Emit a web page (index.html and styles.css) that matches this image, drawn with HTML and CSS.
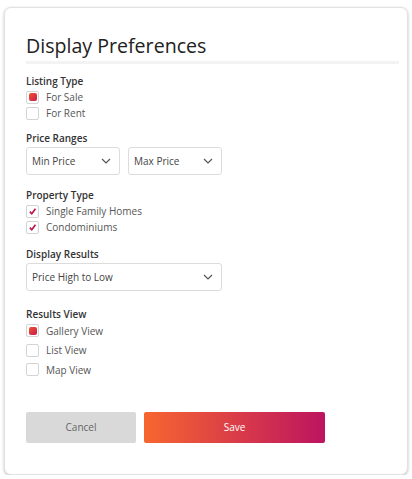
FILE: index.html
```html
<!DOCTYPE html>
<html lang="en">
<head>
  <meta charset="UTF-8">
  <title>Display Preferences</title>
  <link rel="stylesheet" href="styles.css">
</head>
<body>

  <div class="card">
    <h1 class="title">Display Preferences</h1>

    <div class="group">
      <div class="label">Listing Type</div>
      <div class="option"><span class="box dot"></span>For Sale</div>
      <div class="option"><span class="box"></span>For Rent</div>
    </div>

    <div class="group prices">
      <div class="label">Price Ranges</div>
      <div class="selects">
        <div class="select small">Min Price
          <svg class="chev" viewBox="0 0 10 6"><path d="M1 1l4 4 4-4" /></svg>
        </div>
        <div class="select small">Max Price
          <svg class="chev" viewBox="0 0 10 6"><path d="M1 1l4 4 4-4" /></svg>
        </div>
      </div>
    </div>

    <div class="group types">
      <div class="label">Property Type</div>
      <div class="option"><span class="box"><svg class="tick" viewBox="0 0 10 10"><path d="M2 5.2l2.2 2.3L8.3 2" /></svg></span>Single Family Homes</div>
      <div class="option"><span class="box"><svg class="tick" viewBox="0 0 10 10"><path d="M2 5.2l2.2 2.3L8.3 2" /></svg></span>Condominiums</div>
    </div>

    <div class="group sorting">
      <div class="label">Display Results</div>
      <div class="selects">
        <div class="select wide">Price High to Low
          <svg class="chev" viewBox="0 0 10 6"><path d="M1 1l4 4 4-4" /></svg>
        </div>
      </div>
    </div>

    <div class="group views">
      <div class="label">Results View</div>
      <div class="option"><span class="box dot"></span>Gallery View</div>
      <div class="option"><span class="box"></span>List View</div>
      <div class="option"><span class="box"></span>Map View</div>
    </div>

    <div class="actions">
      <button class="btn cancel">Cancel</button>
      <button class="btn save">Save</button>
    </div>
  </div>

</body>
</html>
```

FILE: styles.css
```css
body {
  margin: 0;
  padding: 7px 4px 0 4px;
  background: #fff;
  font-family: 'Open Sans', sans-serif;
  color: #333;
}

.card {
  box-sizing: border-box;
  width: 404px;
  height: 468px;
  padding: 24px 8px 0 21px;
  border: 1px solid #e2e2e2;
  border-radius: 7px;
  box-shadow: 0 1px 3px rgba(0, 0, 0, 0.25);
  background: #fff;
}

.title {
  margin: 0 0 10px 0;
  padding-bottom: 2px;
  font-size: 19.6px;
  line-height: 27px;
  font-weight: 500;
  color: #222;
  border-bottom: 3px solid #f3f3f3;
}

.group {
  margin-bottom: 10px;
}

.prices {
  margin-bottom: 13px;
}

.types {
  margin-bottom: 12px;
}

.sorting {
  margin-bottom: 16px;
}

.label {
  font-size: 10px;
  line-height: 14px;
  font-weight: 600;
  color: #333;
  margin-bottom: 1px;
}

.option {
  display: flex;
  align-items: center;
  height: 16px;
  font-size: 10px;
  color: #555;
}

.views .label {
  margin-bottom: 0;
}

.views .option {
  height: 19.5px;
}

.box {
  box-sizing: border-box;
  width: 13px;
  height: 13px;
  margin-right: 7px;
  border: 1px solid #d4d4d4;
  border-radius: 2px;
  display: flex;
  align-items: center;
  justify-content: center;
}

.dot::after {
  content: "";
  width: 8px;
  height: 8px;
  border-radius: 2px;
  background: linear-gradient(135deg, #f2542e, #c81a4e);
}

.tick {
  width: 9px;
  height: 9px;
  fill: none;
  stroke: #b8124f;
  stroke-width: 1.8;
}

.selects {
  display: flex;
  gap: 8px;
  margin-top: 2px;
}

.select {
  box-sizing: border-box;
  height: 28px;
  padding: 0 8px 0 5px;
  border: 1px solid #dcdcdc;
  border-radius: 3px;
  display: flex;
  align-items: center;
  justify-content: space-between;
  font-size: 10px;
  color: #444;
}

.small {
  width: 94px;
}

.wide {
  width: 196px;
}

.chev {
  width: 10px;
  height: 6px;
  fill: none;
  stroke: #555;
  stroke-width: 1.2;
}

.actions {
  display: flex;
  gap: 8px;
  margin-top: 32px;
}

.btn {
  height: 31px;
  border: none;
  border-radius: 2px;
  font-family: 'Open Sans', sans-serif;
  font-size: 10px;
}

.cancel {
  width: 110px;
  background: #d9d9d9;
  color: #666;
}

.save {
  width: 181px;
  background: linear-gradient(90deg, #f7662f, #bd1460);
  color: #fff;
}
```
